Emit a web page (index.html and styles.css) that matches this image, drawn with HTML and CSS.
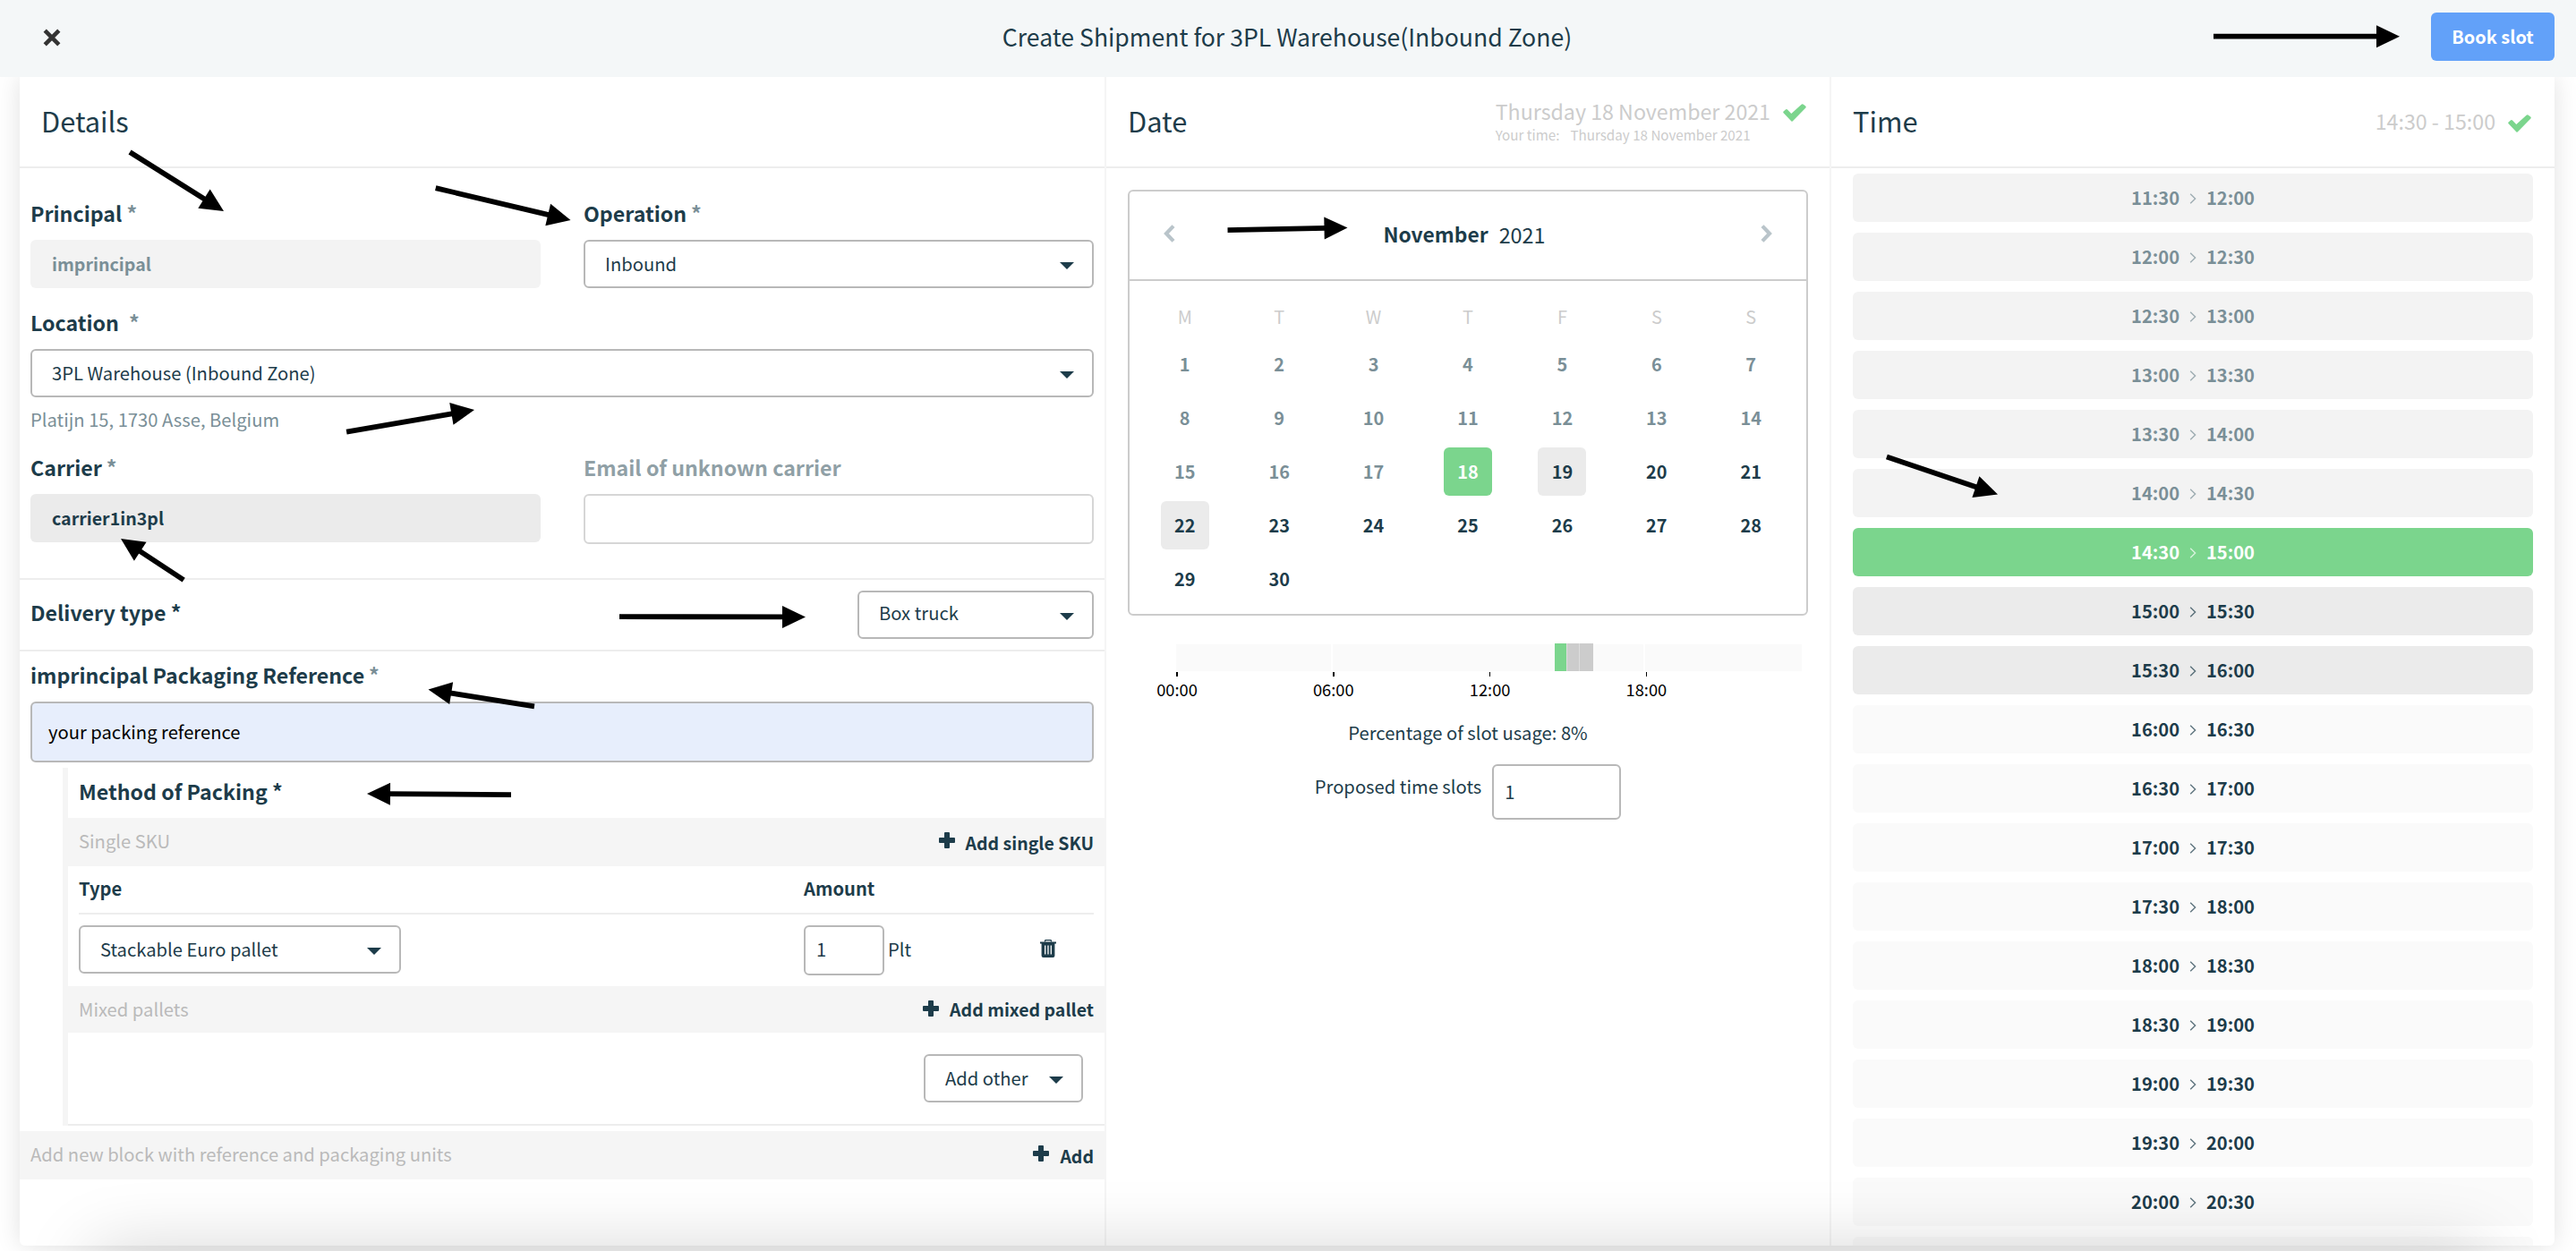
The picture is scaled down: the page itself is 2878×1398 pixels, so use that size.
FILE: index.html
```html
<!DOCTYPE html>
<html lang="en">
<head>
<meta charset="utf-8">
<title>Create Shipment</title>
<link rel="stylesheet" href="styles.css">
</head>
<body>
<svg class="defs" width="0" height="0" aria-hidden="true">
  <symbol id="plus" viewBox="0 0 18 18"><path d="M7 0h4q1 0 1 1v5h5q1 0 1 1v4q0 1-1 1h-5v5q0 1-1 1H7q-1 0-1-1v-5H1q-1 0-1-1V7q0-1 1-1h5V1q0-1 1-1z"/></symbol>
  <symbol id="check" viewBox="0 0 26 20"><path d="M.6 10.2q-.8-.9 0-1.8l2.6-2.1q1-.7 1.8.2l4.3 4.4L20.6.7q.9-1 1.9-.2l2.7 2q1 .9.2 1.9L11.200 19.100q-1 1.200-2 .1z" fill="currentColor"/></symbol>
  <symbol id="sep" viewBox="0 0 8 12"><path d="M1.200 .8L6.600 6l-5.400 5.200" fill="none" stroke="currentColor" stroke-width="1.4"/></symbol>
</svg>

<header class="topbar">
  <svg class="close" viewBox="0 0 20 20"><path d="M2.200 2.200l15.600 15.600M17.800 2.200L2.200 17.800" stroke="#333" stroke-width="4.6"/></svg>
  <h1 class="title">Create Shipment for 3PL Warehouse(Inbound Zone)</h1>
  <button class="book">Book slot</button>
</header>

<main class="panel">
  <section class="col details">
    <div class="col-head"><h2>Details</h2></div>
    <div class="fields">
      <div class="pair pair-first">
        <div class="field"><div class="label">Principal<i>*</i></div><div class="box soft">imprincipal</div></div>
        <div class="field"><div class="label">Operation<i>*</i></div><div class="box select">Inbound<b class="caret"></b></div></div>
      </div>
      <div class="field">
        <div class="label">Location<i class="far">*</i></div>
        <div class="box select">3PL Warehouse (Inbound Zone)<b class="caret"></b></div>
        <div class="address">Platijn 15, 1730 Asse, Belgium</div>
      </div>
      <div class="pair">
        <div class="field"><div class="label">Carrier<i>*</i></div><div class="box solid">carrier1in3pl</div></div>
        <div class="field"><div class="label muted">Email of unknown carrier</div><div class="box empty"></div></div>
      </div>
    </div>
    <div class="delivery">
      <div class="delivery-label">Delivery type *</div>
      <div class="box select truck"><span>Box truck</span><b class="caret"></b></div>
    </div>
    <div class="reference">
      <div class="label">imprincipal Packaging Reference<i>*</i></div>
      <div class="ref-input">your packing reference</div>
    </div>
    <div class="nested">
      <div class="label">Method of Packing *</div>
      <div class="bar"><span class="hint">Single SKU</span><a class="add"><svg><use href="#plus"/></svg>Add single SKU</a></div>
      <div class="sku">
        <div class="sku-row sku-head"><span>Type</span><span>Amount</span></div>
        <div class="sku-row sku-line">
          <div class="box select pallet">Stackable Euro pallet<b class="caret"></b></div>
          <div class="amount"><div class="num">1</div>Plt</div>
          <svg class="trash" viewBox="0 0 18 20"><path d="M5.500 2.600V1.500q0-.9 1-.9h5q1 0 1 .9v1.100" fill="none" stroke="#1d3c4a" stroke-width="1.3"/><path d="M0 2.600h18V4.600h-1.600V18q0 2-2 2H3.600q-2 0-2-2V4.600H0z" fill="#1d3c4a"/><path d="M5.700 6.600v9.800M9 6.600v9.800M12.300 6.600v9.800" stroke="#fff" stroke-width="1.3"/></svg>
        </div>
      </div>
      <div class="bar bar-short"><span class="hint">Mixed pallets</span><a class="add"><svg><use href="#plus"/></svg>Add mixed pallet</a></div>
      <div class="other"><div class="box select other-select">Add other<b class="caret"></b></div></div>
    </div>
    <div class="bar bar-block"><span class="hint">Add new block with reference and packaging units</span><a class="add"><svg><use href="#plus"/></svg>Add</a></div>
  </section>

  <section class="col date">
    <div class="col-head">
      <h2>Date</h2>
      <div class="chosen">
        <div class="chosen-text"><div class="chosen-main">Thursday 18 November 2021</div><div class="chosen-sub"><span>Your time:</span><span>Thursday 18 November 2021</span></div></div>
        <svg class="check"><use href="#check"/></svg>
      </div>
    </div>
    <div class="calendar">
      <div class="cal-head">
        <svg class="chev" viewBox="0 0 13 20"><path d="M11 1.600L3 10l8 8.400" fill="none" stroke="#b9c4ca" stroke-width="4.2"/></svg>
        <div class="month"><b>November</b><span>2021</span></div>
        <svg class="chev" viewBox="0 0 13 20"><path d="M2 1.600L10 10l-8 8.400" fill="none" stroke="#b9c4ca" stroke-width="4.2"/></svg>
      </div>
      <div class="week names"><span>M</span><span>T</span><span>W</span><span>T</span><span>F</span><span>S</span><span>S</span></div>
      <div class="week past"><span>1</span><span>2</span><span>3</span><span>4</span><span>5</span><span>6</span><span>7</span></div>
      <div class="week past"><span>8</span><span>9</span><span>10</span><span>11</span><span>12</span><span>13</span><span>14</span></div>
      <div class="week"><span class="off">15</span><span class="off">16</span><span class="off">17</span><span class="day picked">18</span><span class="day busy">19</span><span>20</span><span>21</span></div>
      <div class="week"><span class="day busy">22</span><span>23</span><span>24</span><span>25</span><span>26</span><span>27</span><span>28</span></div>
      <div class="week"><span>29</span><span>30</span></div>
    </div>
    <div class="timeline">
      <div class="track"><div class="seg six"></div><div class="seg eight"></div><div class="used mine"></div><div class="used"></div><div class="used last"></div><div class="seg two"></div><div class="seg rest"></div></div>
      <div class="ticks"><span><em>00:00</em></span><span><em>06:00</em></span><span><em>12:00</em></span><span><em>18:00</em></span></div>
    </div>
    <div class="usage">Percentage of slot usage: 8%</div>
    <div class="proposed"><span>Proposed time slots</span><div class="num wide">1</div></div>
  </section>

  <section class="col time">
    <div class="col-head">
      <h2>Time</h2>
      <div class="chosen mid"><div class="chosen-main">14:30 - 15:00</div><svg class="check"><use href="#check"/></svg></div>
    </div>
    <div class="slots">
      <div class="slot gone">11:30<svg><use href="#sep"/></svg>12:00</div>
      <div class="slot gone">12:00<svg><use href="#sep"/></svg>12:30</div>
      <div class="slot gone">12:30<svg><use href="#sep"/></svg>13:00</div>
      <div class="slot gone">13:00<svg><use href="#sep"/></svg>13:30</div>
      <div class="slot gone">13:30<svg><use href="#sep"/></svg>14:00</div>
      <div class="slot gone">14:00<svg><use href="#sep"/></svg>14:30</div>
      <div class="slot picked">14:30<svg><use href="#sep"/></svg>15:00</div>
      <div class="slot busy">15:00<svg><use href="#sep"/></svg>15:30</div>
      <div class="slot busy">15:30<svg><use href="#sep"/></svg>16:00</div>
      <div class="slot">16:00<svg><use href="#sep"/></svg>16:30</div>
      <div class="slot">16:30<svg><use href="#sep"/></svg>17:00</div>
      <div class="slot">17:00<svg><use href="#sep"/></svg>17:30</div>
      <div class="slot">17:30<svg><use href="#sep"/></svg>18:00</div>
      <div class="slot">18:00<svg><use href="#sep"/></svg>18:30</div>
      <div class="slot">18:30<svg><use href="#sep"/></svg>19:00</div>
      <div class="slot">19:00<svg><use href="#sep"/></svg>19:30</div>
      <div class="slot">19:30<svg><use href="#sep"/></svg>20:00</div>
      <div class="slot">20:00<svg><use href="#sep"/></svg>20:30</div>
      <div class="slot"></div>
    </div>
  </section>
</main>

<div class="dock-shadow"></div>

<!-- annotation arrows: each is placed at its tip and rotated -->
<svg class="arrows" viewBox="0 0 2878 1398">
  <defs><path id="head" d="M0 0L-26-12.500V12.500z"/></defs>
  <g transform="translate(250 236) rotate(32.2)"><use href="#head"/><path d="M-124 0h100"/></g>
  <g transform="translate(637.500 246) rotate(13.4)"><use href="#head"/><path d="M-155 0h131"/></g>
  <g transform="translate(530 458) rotate(-9.8)"><use href="#head"/><path d="M-145 0h121"/></g>
  <g transform="translate(135 602) rotate(213.3)"><use href="#head"/><path d="M-84 0h60"/></g>
  <g transform="translate(900 689.5) rotate(0.1)"><use href="#head"/><path d="M-208 0h184"/></g>
  <g transform="translate(478.5 770.5) rotate(189.1)"><use href="#head"/><path d="M-120 0h96"/></g>
  <g transform="translate(410 887) rotate(180.4)"><use href="#head"/><path d="M-161 0h137"/></g>
  <g transform="translate(1505.5 254.5) rotate(-1.1)"><use href="#head"/><path d="M-134 0h110"/></g>
  <g transform="translate(2681 40.7)"><use href="#head"/><path d="M-208 0h184"/></g>
  <g transform="translate(2232 552.5) rotate(18.7)"><use href="#head"/><path d="M-131 0h107"/></g>
</svg>
</body>
</html>
```
FILE: styles.css
```css
* { box-sizing: border-box; }
body {
  margin: 0;
  width: 2878px;
  height: 1398px;
  overflow: hidden;
  position: relative;
  background: #fff;
  color: #1d3c4a;
  font: 20.2px/30px "Noto Sans CJK SC", "Noto Sans", sans-serif;
}
h1, h2 { margin: 0; font-weight: 400; }
i, em { font-style: normal; }
.defs { display: block; }

.topbar {
  position: relative;
  z-index: 2;
  height: 86px;
  padding: 0 24px 4px 48px;
  background: #f4f7f8;
  display: grid;
  grid-template-columns: 138px 1fr 138px;
  align-items: center;
}
.close { width: 20px; height: 20px; margin-top: 2px; }
.title { font-size: 26.6px; line-height: 40px; text-align: center; padding-right: 26px; }
.book {
  height: 54px;
  padding: 0;
  border: 0;
  border-radius: 6px;
  background: #62a1f9;
  color: #fff;
  font: 700 19.9px/54px "Noto Sans CJK SC", sans-serif;
}

.panel {
  margin: 0 24px 0 22px;
  height: 1306px;
  display: grid;
  grid-template-columns: 1214px 810px 808px;
  background: #fff;
  border-radius: 0 0 6px 6px;
  box-shadow: 0 0 28px rgba(0, 0, 0, .12);
  clip-path: inset(0 -24px -6px -22px);
}
.col { border-right: 2px solid #f5f5f5; height: 1306px; overflow: hidden; }
.time { border-right: 0; border-radius: 0 0 6px 0; }
.col-head {
  height: 102px;
  border-bottom: 2px solid #ededed;
  padding: 0 24px;
  display: flex;
  justify-content: space-between;
}
.col-head h2 { font-size: 30.8px; line-height: 98px; }

.label { font-size: 23.2px; font-weight: 700; line-height: 30px; padding: 23px 0 15px; white-space: nowrap; }
.label i { color: #7a8f97; margin-left: 5px; font-weight: 700; }
.label i.far { margin-left: 11px; }
.label.muted { color: #90a0a6; }
.fields { padding: 12px 12px 0; height: 458px; }
.pair { display: grid; grid-template-columns: 570px 570px; column-gap: 48px; }
.box { height: 54px; line-height: 54px; border-radius: 6px; padding: 0 24px; white-space: nowrap; }
.soft { background: #f3f3f3; color: #7a8f97; font-weight: 700; font-size: 19.6px; }
.solid { background: #ebebeb; font-weight: 700; font-size: 19.6px; }
.empty { height: 56px; border: 2px solid #d6d6d6; }
.select {
  border: 2px solid #b8b8b8;
  padding: 0 20px 0 22px;
  line-height: 50px;
  display: flex;
  justify-content: space-between;
  align-items: center;
}
.caret { border: 8px solid transparent; border-top: 8px solid #1d3c4a; border-bottom: 0; margin-top: 3px; }
.address { color: #7a8f97; padding-top: 10px; }

.delivery {
  height: 82px;
  border: 2px solid #ededed;
  border-width: 2px 0;
  padding: 12px;
  display: flex;
  justify-content: space-between;
}
.delivery-label { font-size: 23.2px; font-weight: 700; line-height: 48px; }
.truck { width: 264px; }
.truck span { margin-top: -4px; }

.reference { padding: 0 12px; }
.reference .label, .nested .label { padding-top: 11px; }
.ref-input {
  height: 68px;
  border: 2px solid #b8b8b8;
  border-radius: 6px;
  background: #e7eefc;
  color: #000;
  line-height: 63px;
  padding-left: 18px;
}

.nested { margin: 6px 0 6px 48px; border-left: 6px solid #f5f5f5; }
.nested .label { padding-left: 12px; }
.bar { height: 54px; background: #f5f5f5; padding: 0 12px; display: flex; justify-content: space-between; }
.hint { color: #bababa; line-height: 51px; }
.add { font-weight: 700; font-size: 19.5px; line-height: 55px; display: flex; }
.add svg { width: 18px; height: 18px; margin: 16px 12px 0 0; fill: #1d3c4a; }
.bar-short { height: 52px; }
.bar-short .add { line-height: 52px; }
.sku { padding: 0 12px; }
.sku-row { display: grid; grid-template-columns: 810px 264px 60px; }
.sku-head { height: 54px; line-height: 50px; font-weight: 700; border-bottom: 2px solid #ededed; }
.sku-line { height: 80px; padding-top: 12px; }
.pallet { width: 360px; }
.amount { display: flex; gap: 4px; line-height: 54px; }
.num { width: 90px; height: 56px; border: 2px solid #b8b8b8; border-radius: 6px; padding-left: 12px; line-height: 50px; }
.trash { width: 18px; height: 20px; margin-top: 16px; }
.other { height: 104px; padding: 24px; border-bottom: 2px solid #ededed; display: flex; justify-content: flex-end; }
.other-select { width: 178px; }

.chosen { display: flex; color: #ccc; padding-top: 26px; }
.chosen-main { font-size: 23.2px; line-height: 24px; white-space: nowrap; }
.chosen-sub { font-size: 15.2px; line-height: 28px; display: flex; gap: 12px; }
.check { width: 26px; height: 20px; margin: 4px 2px 0 14px; color: #7bd58d; }
.chosen.mid { padding-top: 37px; }
.chosen.mid .check { margin-top: 5px; }

.calendar { margin: 24px 24px 0; height: 476px; border: 2px solid #ccc; border-radius: 6px; }
.cal-head {
  height: 100px;
  border-bottom: 2px solid #ccc;
  padding: 0 38px;
  display: flex;
  justify-content: space-between;
  align-items: center;
}
.chev { width: 13px; height: 20px; margin-bottom: 4px; }
.month { display: flex; gap: 12px; font-size: 22.8px; margin-bottom: 2px; padding-right: 8px; }
.month span { font-size: 23.4px; }
.week { display: grid; grid-template-columns: repeat(7, 105.43px); padding-left: 9px; height: 60px; line-height: 60px; text-align: center; font-weight: 700; font-size: 19.9px; }
.names { height: 63px; line-height: 79px; font-weight: 400; color: #ccc; }
.past, .off { color: #7a8f97; }
.day { width: 54px; height: 54px; line-height: 54px; margin: 3px auto; border-radius: 6px; }
.picked { background: #7bd58d; color: #fff; }
.busy { background: #ebebeb; }

.timeline { margin: 32px 0 0 78px; width: 699px; }
.track { height: 30px; display: flex; }
.seg { background: #fafafa; border-right: 2px solid #fff; }
.six { width: 174.8px; }
.eight { flex: none; width: 248.2px; border: 0; }
.used { width: 14px; background: #ccc; border-right: 1px solid #ddd; height: 31px; margin-top: -1px; }
.used.last { width: 15px; border: 0; }
.used.mine { background: #7bd58d; }
.two { width: 58px; }
.rest { flex: 1; border: 0; }
.ticks { display: grid; grid-template-columns: repeat(4, 174.8px); font-size: 18.3px; line-height: 28px; color: #000; }
.ticks span { display: flex; flex-direction: column; width: 0; align-items: center; margin-left: 1px; }
.ticks span::before { content: ""; width: 1.5px; height: 5px; background: #000; margin: 1px 0 -1px; }
.ticks em { margin-top: 1px; }
.usage { text-align: center; margin-top: 20px; }
.proposed { display: flex; justify-content: center; gap: 12px; margin-top: 20px; line-height: 50px; }
.num.wide { width: 144px; height: 62px; line-height: 58px; }

.slots { padding: 6px 24px 0; display: flex; flex-direction: column; gap: 12px; }
.slot {
  flex: none;
  height: 54px;
  line-height: 54px;
  border-radius: 6px;
  background: #fafafa;
  font-weight: 700;
  font-size: 20.1px;
  display: flex;
  justify-content: center;
  align-items: center;
}
.slot svg { width: 8px; height: 12px; margin: 2px 11px 0; opacity: .7; }
.slot.gone { background: #f3f3f3; color: #7a8f97; }
.slot.picked { background: #7bd58d; color: #fff; }
.slot.busy { background: #ebebeb; }

/* soft shadow rising from below the bottom edge */
.dock-shadow {
  position: absolute;
  left: 110px;
  right: 110px;
  top: 1404px;
  height: 60px;
  box-shadow: 0 0 80px 6px rgba(0, 0, 0, .18);
}
.arrows { position: absolute; z-index: 3; left: 0; top: 0; width: 2878px; height: 1398px; stroke: #000; stroke-width: 5.8; }
.arrows use { stroke: none; }
```
